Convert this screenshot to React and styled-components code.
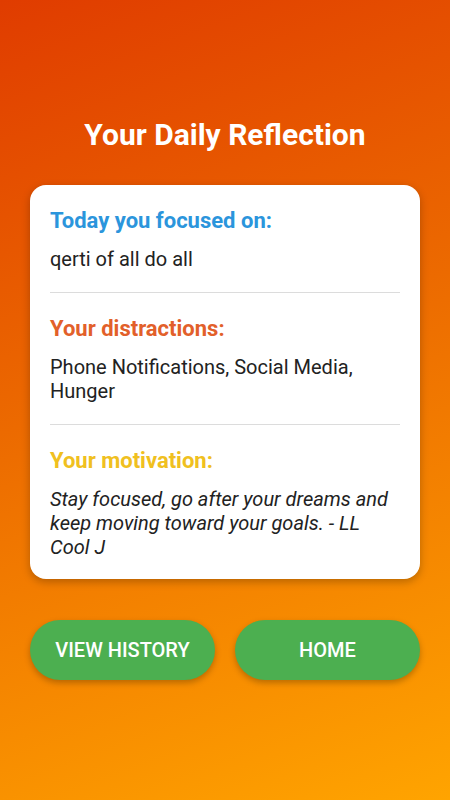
import React from 'react';
import styled, { createGlobalStyle } from 'styled-components';

const GlobalStyle = createGlobalStyle`
  html, body {
    margin: 0;
    padding: 0;
  }
  body {
    font-family: Roboto, "Liberation Sans", sans-serif;
  }
`;

const Screen = styled.div`
  width: 450px;
  height: 800px;
  box-sizing: border-box;
  padding: 116px 30px 0;
  background: linear-gradient(160deg, #e03c00 0%, #ec6a00 45%, #ffa400 100%);
  display: flex;
  flex-direction: column;
`;

const Title = styled.h1`
  margin: 0 0 31px;
  text-align: center;
  color: #fff;
  font-size: 30px;
  font-weight: 700;
  line-height: 38px;
`;

const Card = styled.div`
  background: #fff;
  border-radius: 16px;
  padding: 22px 20px 20px;
  box-shadow: 0 3px 8px rgba(0, 0, 0, 0.25);
`;

const Section = styled.div`
  padding-bottom: ${({ last }) => (last ? '0' : '21px')};
  border-bottom: ${({ last }) => (last ? 'none' : '1px solid #dcdcdc')};
  margin-bottom: ${({ last }) => (last ? '0' : '22px')};
`;

const Heading = styled.h2`
  margin: 0 0 12px;
  font-size: 22px;
  font-weight: 700;
  line-height: 28px;
  color: ${({ color }) => color};
`;

const Body = styled.p`
  margin: 0;
  font-size: 20px;
  line-height: 24px;
  color: #222;
  font-style: ${({ italic }) => (italic ? 'italic' : 'normal')};
`;

const ButtonRow = styled.div`
  display: flex;
  gap: 20px;
  margin-top: 41px;
`;

const Button = styled.button`
  flex: 1;
  height: 60px;
  border: none;
  border-radius: 30px;
  background: #4caf50;
  color: #fff;
  font-family: Roboto, "Liberation Sans", sans-serif;
  font-size: 20px;
  font-weight: 500;
  text-transform: uppercase;
  box-shadow: 0 3px 6px rgba(0, 0, 0, 0.25);
  cursor: pointer;
`;

const sections = [
  { title: 'Today you focused on:', color: '#2b95dc', text: 'qerti of all do all' },
  { title: 'Your distractions:', color: '#e2602a', text: 'Phone Notifications, Social Media, Hunger' },
  {
    title: 'Your motivation:',
    color: '#f0c020',
    text: 'Stay focused, go after your dreams and keep moving toward your goals. - LL Cool J',
    italic: true,
  },
];

const App = () => (
  <>
    <GlobalStyle />
    <Screen>
      <Title>Your Daily Reflection</Title>
      <Card>
        {sections.map((s, i) => (
          <Section key={s.title} last={i === sections.length - 1}>
            <Heading color={s.color}>{s.title}</Heading>
            <Body italic={s.italic}>{s.text}</Body>
          </Section>
        ))}
      </Card>
      <ButtonRow>
        <Button>View History</Button>
        <Button>Home</Button>
      </ButtonRow>
    </Screen>
  </>
);

export default App;
